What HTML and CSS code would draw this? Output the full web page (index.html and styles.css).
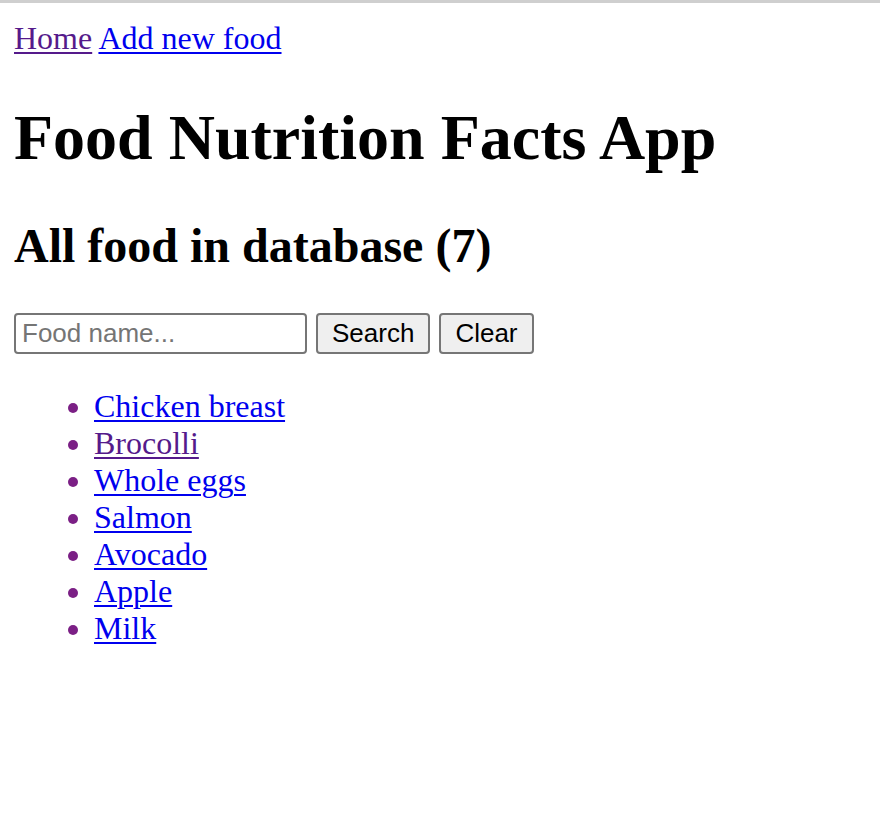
FILE: index.html
```html
<!DOCTYPE html>
<html>
<head>
<meta charset="utf-8">
<title>Food Nutrition Facts App</title>
<link rel="stylesheet" href="styles.css">
</head>
<body>
<div class="topbar"></div>
<div class="page">
  <nav class="nav"><a class="visited" href="#">Home</a> <a href="#">Add new food</a></nav>
  <h1 class="title">Food Nutrition Facts App</h1>
  <h2 class="subtitle">All food in database (7)</h2>
  <form class="search">
    <input class="search-input" type="text" placeholder="Food name...">
    <button class="btn" type="button">Search</button>
    <button class="btn" type="button">Clear</button>
  </form>
  <ul class="food-list">
    <li><a href="#">Chicken breast</a></li>
    <li><a class="visited" href="#">Brocolli</a></li>
    <li><a href="#">Whole eggs</a></li>
    <li><a href="#">Salmon</a></li>
    <li><a href="#">Avocado</a></li>
    <li><a href="#">Apple</a></li>
    <li><a href="#">Milk</a></li>
  </ul>
</div>
</body>
</html>
```
FILE: styles.css
```css
html, body {
  margin: 0;
  padding: 0;
  background: #ffffff;
}
body {
  font-family: "Liberation Serif", "Times New Roman", serif;
  font-size: 32px;
  color: #000;
}
.topbar {
  height: 3px;
  background: #cfcfcf;
}
.page {
  padding: 17px 14px;
}
a {
  color: #0000ee;
  text-decoration: underline;
  text-decoration-thickness: 2px;
  text-underline-offset: 3px;
}
a.visited {
  color: #551a8b;
}
.nav {
  line-height: normal;
}
.title {
  font-size: 64px;
  font-weight: bold;
  margin: 44px 0 43px;
  line-height: normal;
}
.subtitle {
  font-size: 48px;
  font-weight: bold;
  margin: 0 0 40px;
  line-height: normal;
}
.search {
  display: flex;
  gap: 9px;
  align-items: center;
  margin: 0;
}
.search-input {
  box-sizing: border-box;
  width: 293px;
  height: 41px;
  border: 2px solid #767676;
  border-radius: 4px;
  padding: 0 6px;
  font-family: "Liberation Sans", Arial, sans-serif;
  font-size: 26px;
  color: #000;
  background: #fff;
  margin: 0;
}
.search-input::placeholder {
  color: #757575;
}
.btn {
  box-sizing: border-box;
  height: 41px;
  padding: 0 14px;
  border: 2px solid #767676;
  border-radius: 4px;
  background: #efefef;
  font-family: "Liberation Sans", Arial, sans-serif;
  font-size: 26px;
  color: #000;
  margin: 0;
}
.food-list {
  margin: 34px 0 0;
  padding-left: 80px;
  line-height: normal;
}
.food-list li::marker {
  color: #7b1f85;
}
```
